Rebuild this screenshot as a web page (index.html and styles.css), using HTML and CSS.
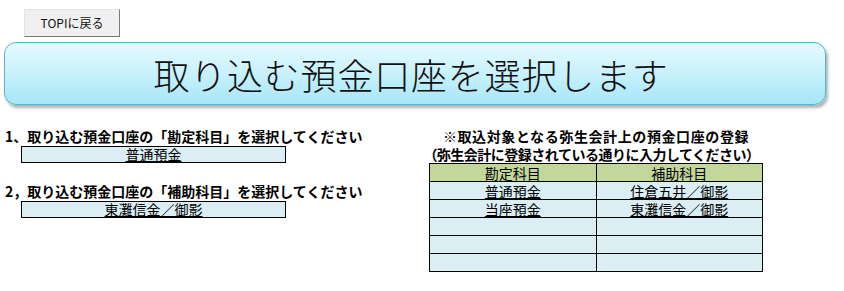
FILE: index.html
```
<!DOCTYPE html>
<html lang="ja">
  <head>
    <meta charset="UTF-8" />
    <meta name="viewport" content="width=device-width, initial-scale=1.0" />
    <title>取り込む預金口座を選択します</title>
    <link rel="stylesheet" href="styles.css">
  </head>
  <body>
    <div class="topbar">
      <button class="btn-top">TOPIに戻る</button>
    </div>

    <div class="banner">
      <h1>取り込む預金口座を選択します</h1>
    </div>

    <div class="main">
      <div class="select-col">
        <h2>1、取り込む預金口座の「勘定科目」を選択してください</h2>
        <div class="select-box">普通預金</div>

        <h2 class="second">2，取り込む預金口座の「補助科目」を選択してください</h2>
        <div class="select-box">東灘信金／御影</div>
      </div>

      <div class="register-col">
        <p class="note">※取込対象となる弥生会計上の預金口座の登録</p>
        <p class="note sub">（弥生会計に登録されている通りに入力してください）</p>
        <table class="accounts">
          <thead>
            <tr>
              <th>勘定科目</th>
              <th>補助科目</th>
            </tr>
          </thead>
          <tbody>
            <tr>
              <td>普通預金</td>
              <td>住倉五井／御影</td>
            </tr>
            <tr>
              <td>当座預金</td>
              <td>東灘信金／御影</td>
            </tr>
            <tr><td></td><td></td></tr>
            <tr><td></td><td></td></tr>
            <tr><td></td><td></td></tr>
          </tbody>
        </table>
      </div>
    </div>
  </body>
</html>
```

FILE: styles.css
```
* {
  margin: 0;
  padding: 0;
  box-sizing: border-box;
}

body {
  font-family: "Noto Sans CJK JP", "Noto Sans", sans-serif;
  background: #fff;
  color: #000;
  width: 844px;
  height: 291px;
  overflow: hidden;
}

.topbar {
  padding: 9px 0 0 24px;
  height: 37px;
}

.btn-top {
  width: 96px;
  height: 28px;
  background: #f0f0f0;
  border: 1px solid;
  border-color: #e4e4e4 #7a7a7a #7a7a7a #e4e4e4;
  font-family: "Noto Sans CJK JP", sans-serif;
  font-size: 12px;
  color: #111;
  line-height: 26px;
}

.banner {
  margin: 5px 0 0 4px;
  width: 822px;
  height: 63px;
  border: 1px solid #58b2c8;
  border-radius: 12px;
  background: linear-gradient(#e6faff 0%, #c8f1fc 50%, #a6e6f7 100%);
  box-shadow: 2px 3px 3px rgba(0, 0, 0, 0.3);
  display: flex;
  justify-content: center;
  align-items: center;
}

.banner h1 {
  font-size: 36px;
  font-weight: 300;
  letter-spacing: 0.8px;
  line-height: 1;
  color: #111;
  margin-right: 8px;
}

.main {
  display: flex;
  margin-top: 22px;
}

.select-col {
  width: 429px;
  padding-left: 5px;
}

.select-col h2 {
  font-size: 14px;
  font-weight: bold;
  line-height: 17px;
  margin-top: 1px;
  white-space: nowrap;
}

.select-col h2.second {
  margin-top: 20px;
}

.select-box {
  margin: 1px 0 0 16px;
  width: 265px;
  height: 17px;
  border: 1px solid #000;
  background: #daeef3;
  font-size: 14px;
  line-height: 15px;
  text-align: center;
  text-decoration: underline;
}

.register-col {
  width: 334px;
}

.note {
  font-size: 14px;
  font-weight: bold;
  line-height: 18px;
  text-align: center;
  white-space: nowrap;
  letter-spacing: 0.6px;
}

.note.sub {
  letter-spacing: -0.5px;
  margin-left: -9px;
}

.accounts {
  width: 334px;
  border-collapse: collapse;
  table-layout: fixed;
  font-size: 14px;
}

.accounts th,
.accounts td {
  border: 1px solid #000;
  height: 18px;
  padding: 0;
  line-height: 16px;
  text-align: center;
  background: #daeef3;
  text-decoration: underline;
}

.accounts th {
  background: #c4d79b;
  font-weight: normal;
  text-decoration: none;
}
```
